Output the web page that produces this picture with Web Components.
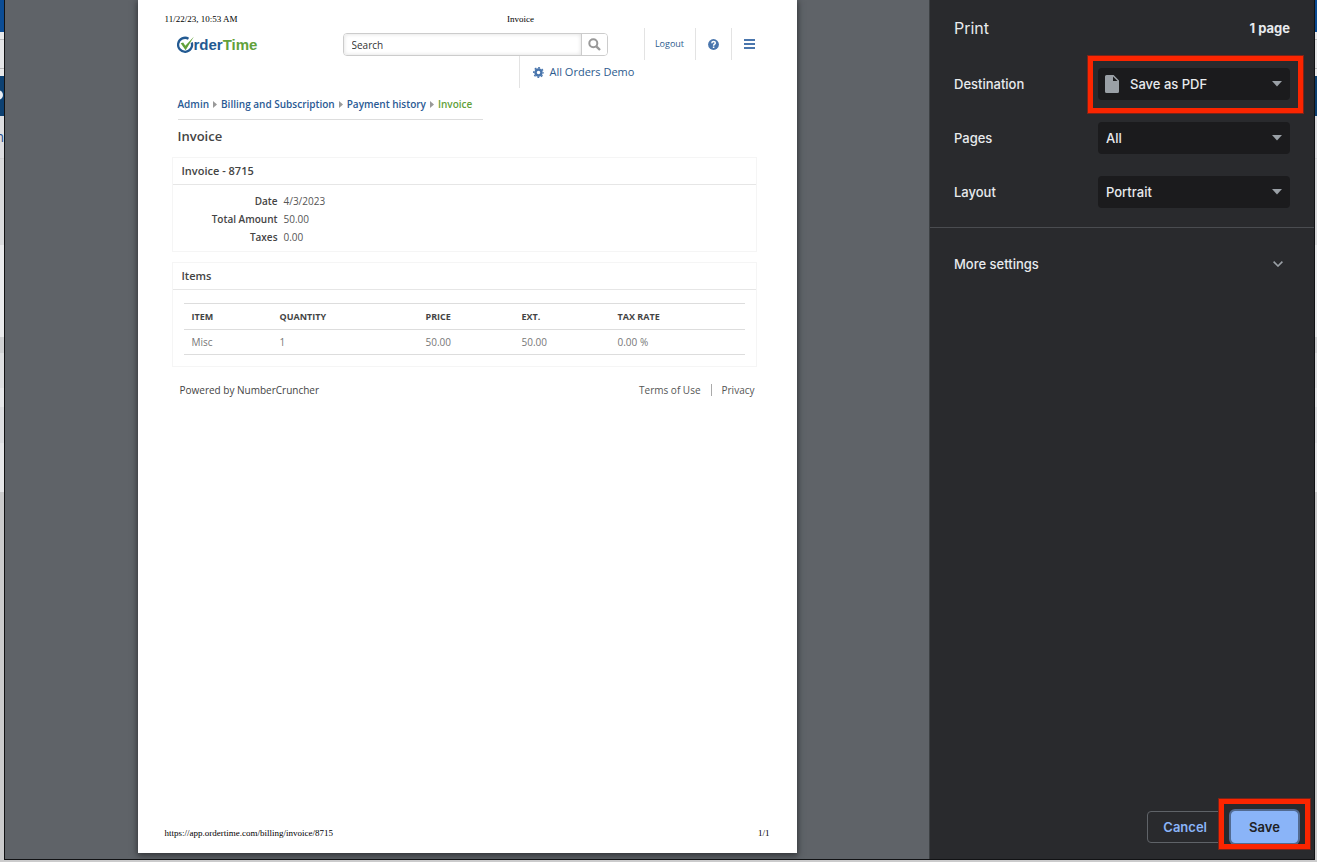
<!DOCTYPE html>
<html lang="en">
<head>
<meta charset="utf-8">
<meta name="viewport" content="width=device-width, initial-scale=1">
<title>Print</title>
<style>
  body {
    margin: 0;
    font-family: Inter, "Liberation Sans", sans-serif;
  }
</style>
</head>
<body>

<print-dialog>
  <paper-sheet slot="preview" date="11/22/23, 10:53 AM" heading="Invoice" url="https://app.ordertime.com/billing/invoice/8715" page="1/1">
    <app-header></app-header>
    <bread-crumbs></bread-crumbs>
    <info-card heading="Invoice - 8715"><invoice-details></invoice-details></info-card>
    <info-card heading="Items"><invoice-items></invoice-items></info-card>
    <app-footer></app-footer>
  </paper-sheet>
  <print-settings slot="settings"></print-settings>
</print-dialog>

<script>
class BaseElement extends HTMLElement {
  connectedCallback() {
    if (this.shadowRoot) return;
    this.attachShadow({ mode: 'open' });
    this.shadowRoot.innerHTML = this.render();
  }
}

class PrintDialog extends BaseElement {
  render() {
    return `
    <style>
    :host {
      display: grid;
      grid-template-columns: 4px 1fr 2px;
      box-sizing: border-box;
      min-height: 100vh;
      padding-bottom: 2px;
      /* strip of the page that stays visible behind the dialog */
      background: linear-gradient(#0b4c94 32px, #e8e9ea 32px 39px, #b9babc 39px 40px, #e4e5e7 40px 68px,
        #b9babc 68px 69px, #e8e9ea 69px 76px, #0d4172 76px 116px, #dcdde0 116px 158px, #cfd0d2 158px 159px,
        #d8d9db 159px 210px, #dadbdd 210px 245px, #e9eaec 245px 337px, #d0d1d3 337px 353px,
        #dedfe1 353px 388px, #e6e7e9 388px 407px, #dcdde0 407px 443px, #e5e6e8 443px 492px, #cbcbcc 492px);
    }

    .behind {
      overflow: hidden;
      padding-top: 90px;
    }

    .dot {
      width: 10px;
      height: 10px;
      margin-left: -7px;
      border-radius: 5px;
      background: #e8edf3;
    }

    .letter {
      display: flex;
      justify-content: flex-end;
      margin-top: 28px;
      color: #1d4d8c;
      font: 14px/18px "Open Sans", sans-serif;
    }

    .dialog {
      display: grid;
      grid-template-columns: 1fr 385px;
      border: 1px solid #111214;
      border-top: 0;
      background: #292a2d;
    }

    .preview {
      display: flex;
      justify-content: center;
      padding-bottom: 6px;
      background: #5f6368;
      overflow: hidden;
    }
    </style>

    <div class="behind" aria-hidden="true"><div class="dot"></div><div class="letter">n</div></div>
    <div class="dialog">
      <div class="preview"><slot name="preview"></slot></div>
      <slot name="settings"></slot>
    </div>
    `;
  }
}

class PaperSheet extends BaseElement {
  render() {
    return `
    <style>
    :host {
      display: flex;
      flex-direction: column;
      box-sizing: border-box;
      width: 100%;
      max-width: 659px;
      padding: 13px 27px 14px;
      background: #fff;
      color: #444;
      font: 10px/18px "Open Sans", sans-serif;
      box-shadow: 0 2px 6px 1px #33363a;
    }

    .line {
      display: flex;
      justify-content: space-between;
      color: #000;
      font: 9px/12px "Liberation Serif", serif;
    }

    .title {
      flex: 1;
      padding-left: 34px;
      text-align: center;
    }

    .content {
      flex: 1;
      padding: 3px 13px 0 7px;
    }
    </style>

    <div class="line"><span>${this.getAttribute('date')}</span><span class="title">${this.getAttribute('heading')}</span></div>
    <div class="content"><slot></slot></div>
    <div class="line"><span>${this.getAttribute('url')}</span><span>${this.getAttribute('page')}</span></div>
    `;
  }
}

class OrderLogo extends BaseElement {
  render() {
    return `
    <style>
    :host {
      display: flex;
      align-items: center;
      color: #235a92;
      font: bold 15px/18px "Liberation Sans", sans-serif;
    }

    svg {
      flex: none;
    }

    b {
      color: #62a13a;
    }
    </style>

    <svg width="17" height="18" viewBox="0 0 17 18" fill="none">
      <path d="M11.5 2.7A7 7 0 1 0 14.7 6.5" stroke="#235a92" stroke-width="2.3"/>
      <path d="M3.7 7.3L6.2 6.6L8.3 9.8L16.8 .8L8.6 14.2Z" fill="#62a13a"/>
    </svg>
    <span>rder<b>Time</b></span>
    `;
  }
}

class AppHeader extends BaseElement {
  render() {
    return `
    <style>
    :host {
      display: block;
      color: #2d5b8e;
    }

    .bar {
      display: flex;
      align-items: flex-start;
    }

    order-logo {
      width: 171px;
      padding: 8px 0 0 5px;
      box-sizing: border-box;
    }

    form {
      display: flex;
      flex: 1;
      height: 23px;
      margin: 5px 36px 0 0;
      box-sizing: border-box;
      border: 1px solid #ccc;
      border-radius: 4px;
      overflow: hidden;
    }

    input {
      flex: 1;
      min-width: 0;
      padding: 0 8px;
      border: 0;
      border-right: 1px solid #ccc;
      box-shadow: inset 0 0 4px #ddd;
      color: #333;
      font: 10px/18px "Open Sans", sans-serif;
    }

    input::placeholder {
      color: #333;
    }

    button {
      display: flex;
      align-items: center;
      justify-content: center;
      width: 25px;
      padding: 0;
      border: 0;
      background: #fff;
    }

    nav {
      display: flex;
      margin-right: -10px;
      align-items: flex-start;
    }

    nav a {
      display: flex;
      align-items: center;
      justify-content: center;
      box-sizing: border-box;
      width: 36px;
      height: 32px;
      border-left: 1px solid #e3e3e3;
      color: inherit;
      font-size: 9px;
      text-decoration: none;
    }

    nav a.logout {
      width: 51px;
    }

    .company {
      display: flex;
      align-items: center;
      gap: 6px;
      height: 32px;
      margin: -4px 0 0 347px;
      padding-left: 13px;
      border-left: 1px solid #e3e3e3;
      font-size: 11px;
    }
    </style>

    <div class="bar">
      <order-logo></order-logo>
      <form>
        <input type="search" placeholder="Search" aria-label="Search">
        <button type="button" aria-label="Search">
          <svg width="13" height="13" viewBox="0 0 13 13" fill="none" stroke="#999" stroke-width="2">
            <circle cx="5.3" cy="5.3" r="4"/><path d="M8.3 8.3L12 12" stroke-width="2.4"/>
          </svg>
        </button>
      </form>
      <nav>
        <a class="logout" href="#logout">Logout</a>
        <a href="#help" aria-label="Help">
          <svg width="11" height="11" viewBox="0 0 11 11" fill="none">
            <circle cx="5.5" cy="5.5" r="5.4" fill="#4a76ad"/>
            <path d="M3.8 4.2C3.9 2.9 4.6 2.5 5.5 2.5C6.6 2.5 7.3 3.1 7.3 4C7.3 5.2 5.6 5.2 5.6 6.7M5.6 7.5V9" stroke="#fff" stroke-width="1.5"/>
          </svg>
        </a>
        <a href="#menu" aria-label="Menu">
          <svg width="11" height="10" viewBox="0 0 11 10" fill="#4a76ad"><path d="M0 0h11v2H0zM0 4h11v2H0zM0 8h11v2H0z"/></svg>
        </a>
      </nav>
    </div>
    <div class="company">
      <svg width="11" height="11" viewBox="0 0 11 11" fill="none" stroke="#4a76ad">
        <circle cx="5.5" cy="5.5" r="3" stroke-width="2.5"/>
        <circle cx="5.5" cy="5.5" r="4.7" stroke-width="1.5" stroke-dasharray="1.85 1.84" stroke-dashoffset=".9"/>
      </svg>
      <span>All Orders Demo</span>
    </div>
    `;
  }
}

class BreadCrumbs extends BaseElement {
  render() {
    return `
    <style>
    :host {
      display: block;
      padding-left: 6px;
    }

    nav {
      display: flex;
      gap: 4px;
      align-items: center;
      width: 305px;
      padding: 7px 0 6px;
      border-bottom: 1px solid #ddd;
      font-weight: 600;
      white-space: nowrap;
    }

    a {
      color: #2a5a94;
      text-decoration: none;
    }

    svg {
      flex: none;
    }

    [aria-current] {
      color: #62a13a;
    }

    h1 {
      margin: 6px 0 11px;
      color: #444;
      font-size: 13px;
      font-weight: 600;
      line-height: 20px;
    }
    </style>

    <nav aria-label="Breadcrumb">
      ${['Admin', 'Billing and Subscription', 'Payment history'].map((name) => `
      <a href="#${name}">${name}</a>
      <svg width="4" height="7" viewBox="0 0 4 7"><path d="M0 0L4 3.5L0 7Z" fill="#999"/></svg>`).join('')}
      <a href="#invoice" aria-current="page">Invoice</a>
    </nav>
    <h1>Invoice</h1>
    `;
  }
}

class InfoCard extends BaseElement {
  render() {
    return `
    <style>
    :host {
      display: block;
      margin-bottom: 10px;
      border: 1px solid #f5f5f5;
    }

    h2 {
      margin: 0;
      padding: 4px 9px;
      border-bottom: 1px solid #e6e6e6;
      color: #444;
      font-size: 11px;
      font-weight: 600;
      line-height: 18px;
    }
    </style>

    <h2>${this.getAttribute('heading')}</h2>
    <slot></slot>
    `;
  }
}

class InvoiceDetails extends BaseElement {
  render() {
    return `
    <style>
    dl {
      display: grid;
      grid-template-columns: 105px 1fr;
      column-gap: 6px;
      margin: 0;
      padding: 7px 0 5px;
    }

    dt {
      font-weight: 600;
      text-align: right;
    }

    dd {
      margin: 0;
      color: #555;
    }
    </style>

    <dl>
      <dt>Date</dt><dd>4/3/2023</dd>
      <dt>Total Amount</dt><dd>50.00</dd>
      <dt>Taxes</dt><dd>0.00</dd>
    </dl>
    `;
  }
}

class InvoiceItems extends BaseElement {
  render() {
    return `
    <style>
    :host {
      display: block;
      padding: 13px 11px 11px;
    }

    table {
      width: 100%;
      border-collapse: collapse;
      table-layout: fixed;
    }

    th, td {
      height: 24px;
      padding: 0 0 0 8px;
      border-top: 1px solid #ddd;
      border-bottom: 1px solid #ddd;
      text-align: left;
    }

    th {
      height: 25px;
      font-size: 9px;
      text-transform: uppercase;
    }

    td {
      color: #777;
    }
    </style>

    <table>
      <colgroup><col style="width:88px"><col style="width:146px"><col style="width:96px"><col style="width:96px"><col></colgroup>
      <thead><tr><th>Item</th><th>Quantity</th><th>Price</th><th>Ext.</th><th>Tax Rate</th></tr></thead>
      <tbody><tr><td>Misc</td><td>1</td><td>50.00</td><td>50.00</td><td>0.00 %</td></tr></tbody>
    </table>
    `;
  }
}

class AppFooter extends BaseElement {
  render() {
    return `
    <style>
    :host {
      display: flex;
      justify-content: space-between;
      padding: 4px 2px 0 8px;
    }

    nav {
      display: flex;
      align-items: center;
    }

    a {
      color: #555;
      text-decoration: none;
    }

    a + a {
      margin-left: 10px;
      padding-left: 10px;
      border-left: 1px solid #aaa;
      line-height: 12px;
    }
    </style>

    <span>Powered by NumberCruncher</span>
    <nav><a href="#terms">Terms of Use</a><a href="#privacy">Privacy</a></nav>
    `;
  }
}

class SettingRow extends BaseElement {
  render() {
    const icon = this.hasAttribute('icon') ? `
      <svg class="icon" width="14" height="18" viewBox="0 0 14 18">
        <path d="M1.5 0H8.6L14 5.4V16.5Q14 18 12.5 18H1.5Q0 18 0 16.5V1.5Q0 0 1.5 0ZM8 1.5V6H12.5Z" fill="#9aa0a6" fill-rule="evenodd"/>
      </svg>` : '';

    return `
    <style>
    :host {
      display: flex;
      align-items: center;
      justify-content: space-between;
      margin-bottom: 22px;
    }

    .field {
      position: relative;
      display: grid;
      width: 192px;
      align-items: center;
    }

    /* select, icon and arrow share the one cell */
    select, svg {
      grid-area: 1 / 1;
    }

    select {
      width: 100%;
      height: 32px;
      padding: 0 24px 0 8px;
      appearance: none;
      border: 0;
      border-radius: 4px;
      background: #1b1b1d;
      color: #e8eaed;
      font: inherit;
    }

    :host([icon]) select {
      padding-left: 32px;
    }

    svg {
      z-index: 1;
      pointer-events: none;
    }

    .icon {
      margin-left: 7px;
    }

    .arrow {
      justify-self: end;
      margin-right: 8px;
    }

    :host([marked]) .field::after {
      content: "";
      position: absolute;
      inset: -12px -13px -13px -10px;
      border: 5px solid #fb2500;
      outline: 1px solid #7c2318;
      pointer-events: none;
    }
    </style>

    <label for="field">${this.getAttribute('label')}</label>
    <div class="field">
      <select id="field"><option>${this.getAttribute('value')}</option></select>
      ${icon}
      <svg class="arrow" width="10" height="6" viewBox="0 0 10 6"><path d="M0 0H10L5 5.5Z" fill="#9aa0a6"/></svg>
    </div>
    `;
  }
}

class PrintSettings extends BaseElement {
  render() {
    return `
    <style>
    :host {
      display: flex;
      flex-direction: column;
      border-left: 1px solid #3c4043;
      box-sizing: border-box;
      color: #e8eaed;
      font-size: 13px;
      font-weight: 500;
      line-height: 20px;
    }

    header {
      display: flex;
      align-items: center;
      justify-content: space-between;
      padding: 18px 24px 30px;
    }

    h1 {
      margin: 0;
      font-size: 16px;
      font-weight: 400;
      line-height: 20px;
    }

    .rows {
      padding: 0 24px;
      border-bottom: 1px solid #4a4c50;
      margin-bottom: 20px;
    }

    .rows setting-row:last-child {
      margin-bottom: 19px;
    }

    .more {
      display: flex;
      align-items: center;
      justify-content: space-between;
      height: 32px;
      padding: 0 31px 0 24px;
      border: 0;
      background: none;
      color: inherit;
      font: inherit;
    }

    footer {
      display: flex;
      justify-content: flex-end;
      gap: 8px;
      margin-top: auto;
      padding: 16px;
    }

    footer button {
      height: 32px;
      padding: 0 15px;
      border: 1px solid #5f6368;
      border-radius: 4px;
      background: none;
      color: #8ab4f8;
      font: inherit;
      font-weight: 600;
    }

    footer .save {
      width: 67px;
      border-color: #8ab4f8;
      background: #8ab4f8;
      color: #202124;
      box-shadow: 0 0 0 2px #526a90;
    }

    .marked {
      position: relative;
      display: flex;
    }

    .marked::after {
      content: "";
      position: absolute;
      inset: -12px -12px -6px;
      border: 5px solid #fb2500;
      outline: 1px solid #7c2318;
      pointer-events: none;
    }
    </style>

    <header><h1>Print</h1><strong>1 page</strong></header>
    <div class="rows">
      <setting-row label="Destination" value="Save as PDF" icon marked></setting-row>
      <setting-row label="Pages" value="All"></setting-row>
      <setting-row label="Layout" value="Portrait"></setting-row>
    </div>
    <button class="more" type="button" aria-expanded="false">
      <span>More settings</span>
      <svg width="10" height="6" viewBox="0 0 10 6" fill="none" stroke="#9aa0a6" stroke-width="1.6"><path d="M.6 .6L5 5L9.4 .6"/></svg>
    </button>
    <footer>
      <button type="button">Cancel</button>
      <span class="marked"><button class="save" type="button">Save</button></span>
    </footer>
    `;
  }
}

customElements.define('order-logo', OrderLogo);
customElements.define('app-header', AppHeader);
customElements.define('bread-crumbs', BreadCrumbs);
customElements.define('info-card', InfoCard);
customElements.define('invoice-details', InvoiceDetails);
customElements.define('invoice-items', InvoiceItems);
customElements.define('app-footer', AppFooter);
customElements.define('setting-row', SettingRow);
customElements.define('print-settings', PrintSettings);
customElements.define('paper-sheet', PaperSheet);
customElements.define('print-dialog', PrintDialog);
</script>
</body>
</html>
